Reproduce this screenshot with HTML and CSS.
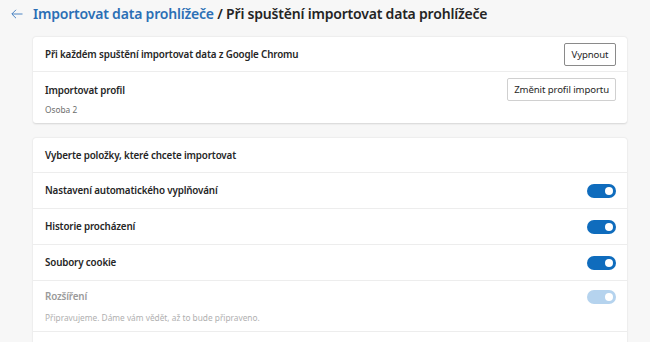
FILE: index.html
```html
<!DOCTYPE html>
<html lang="cs">
<head>
<meta charset="utf-8">
<link rel="stylesheet" href="styles.css">
</head>
<body>
<div class="page">
  <header class="top">
    <svg class="back" width="12" height="10" viewBox="0 0 12 10"><path d="M11.5 5H1M5 0.8L0.8 5 5 9.2" fill="none" stroke="#3a78bd" stroke-width="0.9"/></svg>
    <h1 class="title"><span class="crumb">Importovat data prohlížeče</span> / Při spuštění importovat data prohlížeče</h1>
  </header>
  <main class="content">
    <section class="card">
      <div class="row r1">
        <div class="label">Při každém spuštění importovat data z Google Chromu</div>
        <button class="btn btn-strong">Vypnout</button>
      </div>
      <div class="row r2">
        <div class="text">
          <div class="label">Importovat profil</div>
          <div class="sub">Osoba 2</div>
        </div>
        <button class="btn">Změnit profil importu</button>
      </div>
    </section>
    <section class="card card2">
      <div class="row head"><div class="label">Vyberte položky, které chcete importovat</div></div>
      <div class="row item"><div class="label">Nastavení automatického vyplňování</div><span class="toggle"></span></div>
      <div class="row item"><div class="label">Historie procházení</div><span class="toggle"></span></div>
      <div class="row item"><div class="label">Soubory cookie</div><span class="toggle"></span></div>
      <div class="row item2 disabled">
        <div class="text">
          <div class="label">Rozšíření</div>
          <div class="sub">Připravujeme. Dáme vám vědět, až to bude připraveno.</div>
        </div>
        <span class="toggle off"></span>
      </div>
      <div class="row item"></div>
    </section>
  </main>
</div>
</body>
</html>
```
FILE: styles.css
```css
html, body {
  margin: 0;
  padding: 0;
  background: #f7f7f7;
  font-family: "Noto Sans", "Open Sans", sans-serif;
  color: #1b1b1b;
}
.page {
  width: 650px;
  height: 342px;
  overflow: hidden;
}
.top {
  display: flex;
  align-items: center;
  height: 27px;
  padding-left: 11px;
}
.back {
  display: block;
  margin-right: 10px;
}
.title {
  margin: 0;
  font-size: 14px;
  font-weight: 600;
  color: #242424;
  letter-spacing: -0.2px;
  white-space: nowrap;
}
.crumb {
  color: #2b6fb5;
}
.content {
  padding: 10px 23px 0 33px;
}
.card {
  background: #fff;
  border-radius: 3px;
  box-shadow: 0 0.5px 2px rgba(0,0,0,0.14);
}
.card2 {
  margin-top: 15px;
}
.row {
  display: flex;
  align-items: center;
  justify-content: space-between;
  padding: 0 11px 0 12px;
  border-top: 1px solid #ededed;
}
.row:first-child {
  border-top: none;
}
.r1 { height: 34px; }
.r2 { height: 52px; align-items: flex-start; padding-top: 6px; box-sizing: border-box; }
.head { height: 34px; }
.item { height: 35px; }
.item2 { height: 51px; align-items: flex-start; padding-top: 9px; box-sizing: border-box; }
.label {
  font-size: 9.8px;
  font-weight: 600;
  color: #262626;
  letter-spacing: -0.15px;
}
.sub {
  font-size: 8.3px;
  color: #6e6e6e;
  margin-top: 7px;
}
.r2 .label { margin-top: 6px; }
.btn {
  font-family: inherit;
  font-size: 9.6px;
  color: #262626;
  background: #fff;
  border: 1px solid #d0d0d0;
  border-radius: 2px;
  height: 23px;
  padding: 0 6px;
  margin: 0;
  letter-spacing: -0.1px;
}
.btn-strong {
  border: 1.5px solid #8a8a8a;
  width: 52px;
  padding: 0;
}
.toggle {
  position: relative;
  display: block;
  width: 29px;
  height: 14px;
  border-radius: 7px;
  background: #0f6cbd;
}
.toggle::after {
  content: "";
  position: absolute;
  right: 3px;
  top: 3px;
  width: 8px;
  height: 8px;
  border-radius: 50%;
  background: #fff;
}
.toggle.off {
  background: #b5d3ee;
}
.disabled .label { color: #9a9a9a; }
.disabled .sub { color: #b0b0b0; }
.item2 .sub { margin-top: 9px; }
```
